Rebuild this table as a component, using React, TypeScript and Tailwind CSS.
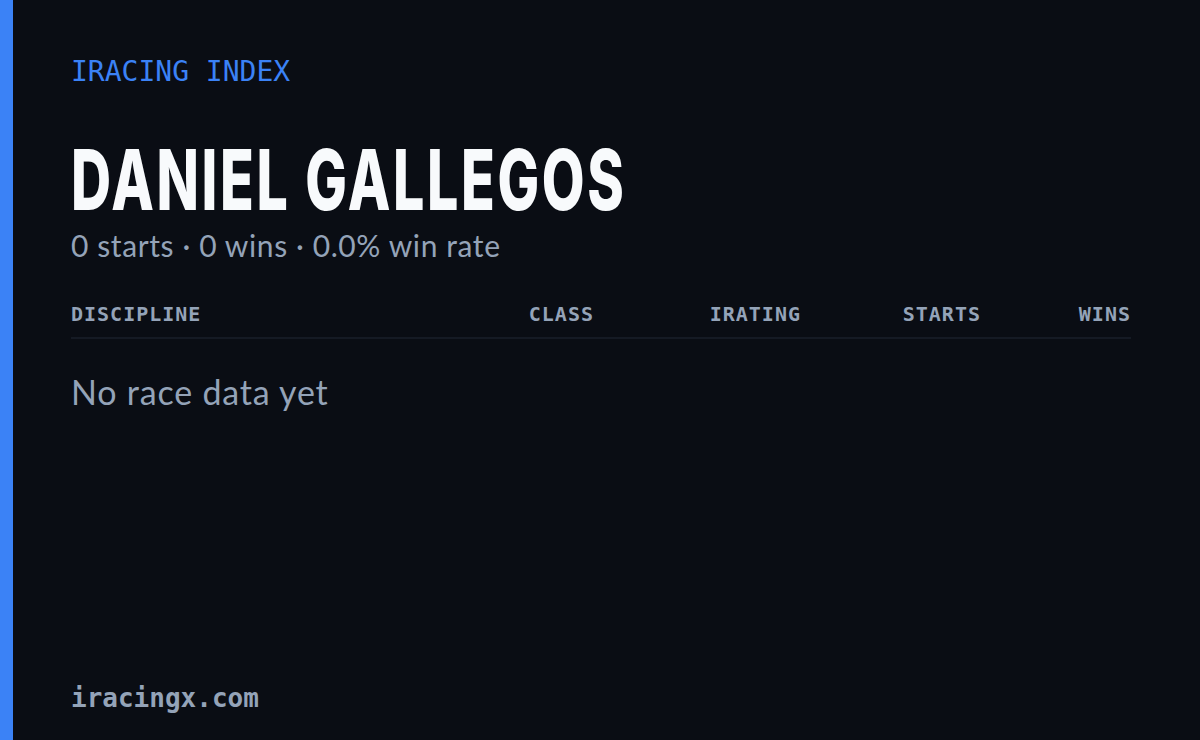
export default function App() {
  const cols = ["CLASS", "IRATING", "STARTS", "WINS"];

  return (
    <div className="flex w-[1200px] h-[740px] bg-[#0a0d14] overflow-hidden">
      <div className="w-[13px] shrink-0 bg-[#3b82f6]" />
      <div className="flex flex-1 flex-col pl-[58px] pr-[69px] pt-[56px] pb-[26px]">
        <div className="font-['DejaVu_Sans_Mono',monospace] text-[28px] leading-[32px] text-[#3b82f6] font-medium">
          IRACING INDEX
        </div>

        <h1 className="mt-[54px] origin-left scale-x-[0.66] whitespace-nowrap font-['Inter',sans-serif] font-extrabold text-[84px] leading-[76px] tracking-[4px] text-[#f8fafc]">
          DANIEL GALLEGOS
        </h1>
        <p className="mt-[9px] font-['Lato',sans-serif] text-[30px] leading-[36px] tracking-[0.6px] text-[#94a3b8]">
          0 starts · 0 wins · 0.0% win rate
        </p>

        <div className="mt-[39px] grid grid-cols-[1fr_120px_207px_180px_150px] border-b-2 border-[#151a24] pb-[11px] font-['DejaVu_Sans_Mono',monospace] font-bold text-[20px] leading-[24px] tracking-[1px] text-[#94a3b8]">
          <div>DISCIPLINE</div>
          {cols.map((c) => (
            <div key={c} className="text-right">
              {c}
            </div>
          ))}
        </div>

        <div className="mt-[33px] font-['Lato',sans-serif] text-[34px] leading-[40px] tracking-[0.8px] text-[#94a3b8]">
          No race data yet
        </div>

        <div className="mt-auto font-['DejaVu_Sans_Mono',monospace] font-bold text-[26px] leading-[32px] text-[#94a3b8]">
          iracingx.com
        </div>
      </div>
    </div>
  );
}
